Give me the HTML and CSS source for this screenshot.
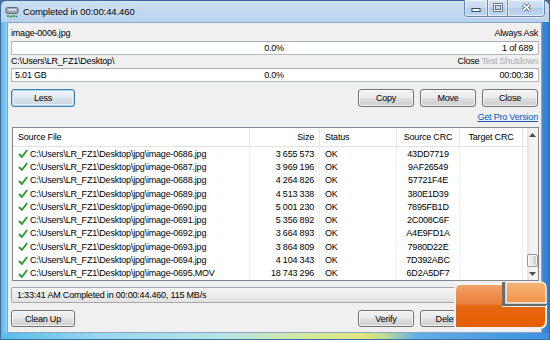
FILE: index.html
```html
<!DOCTYPE html>
<html>
<head>
<meta charset="utf-8">
<link rel="stylesheet" href="styles.css">
</head>
<body>
<div class="window">
  <div class="titlebar">
    <svg class="app-icon" width="14" height="13" viewBox="0 0 14 13">
      <rect x="1" y="1.5" width="12" height="6" rx="1.5" fill="#9aa6b0" stroke="#5d6a75" stroke-width="1"/>
      <rect x="2.5" y="3" width="9" height="1.5" fill="#dfe6ec"/>
      <circle cx="3" cy="10" r="1.2" fill="#3aa34a"/>
      <circle cx="6" cy="10.5" r="1.2" fill="#3aa34a"/>
      <circle cx="9" cy="10" r="1.2" fill="#3aa34a"/>
      <circle cx="11.5" cy="10.5" r="1" fill="#2d7fc1"/>
    </svg>
    <span class="title">Completed in 00:00:44.460</span>
    <div class="caption-btns">
      <div class="cb cb-min">
        <svg width="10" height="6" viewBox="0 0 10 6"><rect x="1" y="1.5" width="8" height="3" fill="#fff" stroke="#3a4b5e" stroke-width="1"/></svg>
      </div>
      <div class="cb cb-max">
        <svg width="10" height="9" viewBox="0 0 10 9"><rect x="1.5" y="1.5" width="7" height="6" fill="none" stroke="#3a4b5e" stroke-width="2.4"/><rect x="1.5" y="1.5" width="7" height="6" fill="none" stroke="#fff" stroke-width="1"/></svg>
      </div>
      <div class="cb cb-close">
        <svg width="11" height="9" viewBox="0 0 11 9"><path d="M2 1.5 L9 7.5 M9 1.5 L2 7.5" stroke="#3a4b5e" stroke-width="3.4"/><path d="M2 1.5 L9 7.5 M9 1.5 L2 7.5" stroke="#fff" stroke-width="1.8"/></svg>
      </div>
    </div>
  </div>
  <div class="frame-mid">
    <div class="client">
      <div class="label-row">
        <span>image-0006.jpg</span>
        <span>Always Ask</span>
      </div>
      <div class="progress first">
        <span class="p-left"></span>
        <span class="p-mid">0.0%</span>
        <span class="p-right">1 of 689</span>
      </div>
      <div class="label-row">
        <span>C:\Users\LR_FZ1\Desktop\</span>
        <span class="after-actions"><span>Close</span> <span class="dim">Test</span> <span class="dim">Shutdown</span></span>
      </div>
      <div class="progress">
        <span class="p-left">5.01 GB</span>
        <span class="p-mid">0.0%</span>
        <span class="p-right">00:00:38</span>
      </div>
      <div class="button-row">
        <button class="btn btn-default">Less</button>
        <div class="btn-group">
          <button class="btn">Copy</button>
          <button class="btn">Move</button>
          <button class="btn">Close</button>
        </div>
      </div>
      <div class="link-row"><a class="pro-link">Get Pro Version</a></div>
      <div class="list">
        <div class="list-main">
          <div class="list-head">
            <div class="hc">Source File</div>
            <div class="hc r">Size</div>
            <div class="hc">Status</div>
            <div class="hc c">Source CRC</div>
            <div class="hc c">Target CRC</div>
            <div class="hc last"></div>
          </div>
          <div class="rows">
            <div class="row"><div class="cell file"><svg class="tick" width="10" height="9" viewBox="0 0 10 9"><path d="M1 5 L3.8 8 L9.2 1" fill="none" stroke="#2e9b32" stroke-width="1.9"/></svg>C:\Users\LR_FZ1\Desktop\jpg\image-0686.jpg</div><div class="cell r">3 655 573</div><div class="cell">OK</div><div class="cell c">43DD7719</div><div class="cell"></div><div class="cell last"></div></div>
            <div class="row"><div class="cell file"><svg class="tick" width="10" height="9" viewBox="0 0 10 9"><path d="M1 5 L3.8 8 L9.2 1" fill="none" stroke="#2e9b32" stroke-width="1.9"/></svg>C:\Users\LR_FZ1\Desktop\jpg\image-0687.jpg</div><div class="cell r">3 969 196</div><div class="cell">OK</div><div class="cell c">9AF26549</div><div class="cell"></div><div class="cell last"></div></div>
            <div class="row"><div class="cell file"><svg class="tick" width="10" height="9" viewBox="0 0 10 9"><path d="M1 5 L3.8 8 L9.2 1" fill="none" stroke="#2e9b32" stroke-width="1.9"/></svg>C:\Users\LR_FZ1\Desktop\jpg\image-0688.jpg</div><div class="cell r">4 264 826</div><div class="cell">OK</div><div class="cell c">57721F4E</div><div class="cell"></div><div class="cell last"></div></div>
            <div class="row"><div class="cell file"><svg class="tick" width="10" height="9" viewBox="0 0 10 9"><path d="M1 5 L3.8 8 L9.2 1" fill="none" stroke="#2e9b32" stroke-width="1.9"/></svg>C:\Users\LR_FZ1\Desktop\jpg\image-0689.jpg</div><div class="cell r">4 513 338</div><div class="cell">OK</div><div class="cell c">380E1D39</div><div class="cell"></div><div class="cell last"></div></div>
            <div class="row"><div class="cell file"><svg class="tick" width="10" height="9" viewBox="0 0 10 9"><path d="M1 5 L3.8 8 L9.2 1" fill="none" stroke="#2e9b32" stroke-width="1.9"/></svg>C:\Users\LR_FZ1\Desktop\jpg\image-0690.jpg</div><div class="cell r">5 001 230</div><div class="cell">OK</div><div class="cell c">7895FB1D</div><div class="cell"></div><div class="cell last"></div></div>
            <div class="row"><div class="cell file"><svg class="tick" width="10" height="9" viewBox="0 0 10 9"><path d="M1 5 L3.8 8 L9.2 1" fill="none" stroke="#2e9b32" stroke-width="1.9"/></svg>C:\Users\LR_FZ1\Desktop\jpg\image-0691.jpg</div><div class="cell r">5 356 892</div><div class="cell">OK</div><div class="cell c">2C008C6F</div><div class="cell"></div><div class="cell last"></div></div>
            <div class="row"><div class="cell file"><svg class="tick" width="10" height="9" viewBox="0 0 10 9"><path d="M1 5 L3.8 8 L9.2 1" fill="none" stroke="#2e9b32" stroke-width="1.9"/></svg>C:\Users\LR_FZ1\Desktop\jpg\image-0692.jpg</div><div class="cell r">3 664 893</div><div class="cell">OK</div><div class="cell c">A4E9FD1A</div><div class="cell"></div><div class="cell last"></div></div>
            <div class="row"><div class="cell file"><svg class="tick" width="10" height="9" viewBox="0 0 10 9"><path d="M1 5 L3.8 8 L9.2 1" fill="none" stroke="#2e9b32" stroke-width="1.9"/></svg>C:\Users\LR_FZ1\Desktop\jpg\image-0693.jpg</div><div class="cell r">3 864 809</div><div class="cell">OK</div><div class="cell c">7980D22E</div><div class="cell"></div><div class="cell last"></div></div>
            <div class="row"><div class="cell file"><svg class="tick" width="10" height="9" viewBox="0 0 10 9"><path d="M1 5 L3.8 8 L9.2 1" fill="none" stroke="#2e9b32" stroke-width="1.9"/></svg>C:\Users\LR_FZ1\Desktop\jpg\image-0694.jpg</div><div class="cell r">4 104 343</div><div class="cell">OK</div><div class="cell c">7D392ABC</div><div class="cell"></div><div class="cell last"></div></div>
            <div class="row"><div class="cell file"><svg class="tick" width="10" height="9" viewBox="0 0 10 9"><path d="M1 5 L3.8 8 L9.2 1" fill="none" stroke="#2e9b32" stroke-width="1.9"/></svg>C:\Users\LR_FZ1\Desktop\jpg\image-0695.MOV</div><div class="cell r">18 743 296</div><div class="cell">OK</div><div class="cell c">6D2A5DF7</div><div class="cell"></div><div class="cell last"></div></div>
          </div>
        </div>
        <div class="scrollbar">
          <div class="sb-arrow"><svg width="7" height="4" viewBox="0 0 7 4"><path d="M0 4 L3.5 0 L7 4 Z" fill="#4d4d4d"/></svg></div>
          <div class="sb-track"><div class="sb-thumb"></div></div>
          <div class="sb-arrow"><svg width="7" height="4" viewBox="0 0 7 4"><path d="M0 0 L3.5 4 L7 0 Z" fill="#4d4d4d"/></svg></div>
        </div>
      </div>
      <div class="statusbar">1:33:41 AM Completed in 00:00:44.460, 115 MB/s</div>
      <div class="button-row bottom-row">
        <button class="btn">Clean Up</button>
        <div class="btn-group">
          <button class="btn">Verify</button>
          <button class="btn">Delete</button>
        </div>
      </div>
    </div>
  </div>
  <div class="frame-bottom"></div>
  <svg class="site-logo" width="96" height="48" viewBox="0 0 96 48">
    <defs>
      <linearGradient id="lgMain" x1="0" y1="0" x2="0" y2="1">
        <stop offset="0" stop-color="#f2a468"/>
        <stop offset="0.45" stop-color="#e9803a"/>
        <stop offset="0.5" stop-color="#e66812"/>
        <stop offset="1" stop-color="#e45c00"/>
      </linearGradient>
      <linearGradient id="lgLight" x1="0" y1="0" x2="0" y2="1">
        <stop offset="0" stop-color="#f8b67c"/>
        <stop offset="1" stop-color="#f2934a"/>
      </linearGradient>
    </defs>
    <path d="M8 3 H50 V25 H93 V40 Q93 47 86 47 H2 V9 Q2 3 8 3 Z" fill="url(#lgMain)" stroke="#f3f3f3" stroke-width="2"/>
    <rect x="49" y="1" width="44" height="24" fill="#6c6c6c"/>
    <path d="M53 1 H87 Q93 1 93 7 V22 H53 Z" fill="url(#lgLight)" stroke="#f3f3f3" stroke-width="1.5"/>
  </svg>
</div>
</body>
</html>
```
FILE: styles.css
```css
* { box-sizing: border-box; }

html, body {
  margin: 0;
  padding: 0;
}

body {
  width: 550px;
  height: 340px;
  overflow: hidden;
  font-family: "Liberation Sans", Arial, sans-serif;
  font-size: 9px;
  letter-spacing: -0.2px;
  color: #000;
  background: #fff;
}

.window {
  position: relative;
  width: 550px;
  height: 340px;
  display: flex;
  flex-direction: column;
  background: linear-gradient(90deg, #49b2e6 0%, #8fcdf0 1.2%, #a9d3f0 4%, #b6d2ee 50%, #8cbbe6 95%, #3f8edb 98.5%, #2b78d0 100%);
  box-shadow: inset 0 0 0 1px #3d6a98;
}

/* Title bar */
.titlebar {
  height: 22px;
  flex: none;
  display: flex;
  align-items: center;
  padding-left: 4px;
  background: linear-gradient(180deg, #cde0f3 0%, #c0d7ef 60%, #b9d2ed 100%);
  border-top: 1px solid #3d6a98;
  border-left: 1px solid #3d6a98;
  border-right: 1px solid #3d6a98;
  border-radius: 6px 6px 0 0;
}

.app-icon {
  flex: none;
  margin-right: 4px;
  margin-top: 1px;
}

.title {
  font-size: 9.5px;
  letter-spacing: -0.1px;
  color: #000;
  text-shadow: 0 0 6px rgba(255,255,255,0.9);
}

.caption-btns {
  margin-left: auto;
  margin-right: 4px;
  align-self: flex-start;
  margin-top: -1px;
  display: flex;
  height: 17px;
  border: 1px solid #6d86a5;
  border-top: none;
  border-radius: 0 0 4px 4px;
  overflow: hidden;
  box-shadow: 0 1px 0 rgba(255,255,255,0.6);
}

.cb {
  display: flex;
  align-items: center;
  justify-content: center;
  background: linear-gradient(180deg, #d3e3f3 0%, #c6daf0 50%, #b4cde9 50%, #bcd6f1 100%);
  box-shadow: inset 0 0 0 1px rgba(255,255,255,0.55);
}

.cb-min { width: 23px; border-right: 1px solid #6d86a5; padding-top: 4px; }
.cb-max { width: 20px; border-right: 1px solid #6d86a5; padding-bottom: 2px; }
.cb-close { width: 36px; padding-bottom: 2px; }

/* Frame */
.frame-mid {
  flex: 1;
  display: flex;
  padding: 0 8px 0 7px;
  min-height: 0;
  min-width: 0;
}

.client {
  flex: 1;
  display: flex;
  flex-direction: column;
  background: #f0f0f0;
  border: 1px solid #8da5c2;
  padding: 4px 2px 0 3px;
  min-height: 0;
  min-width: 0;
}

.frame-bottom {
  height: 7px;
  flex: none;
  background: linear-gradient(90deg, #58bde9 0%, #9ad6ef 18%, #b6e3e6 40%, #d2eaa2 55%, #e3e67c 66%, #bcdc98 70%, #5eb0e6 76%, #3d8fde 100%);
  border-bottom: 1px solid #3a6f9f;
  border-left: 1px solid #3d6a98;
  border-right: 1px solid #3d6a98;
}

/* Labels and progress */
.label-row {
  display: flex;
  justify-content: space-between;
  align-items: center;
  height: 13px;
  line-height: 13px;
  padding: 0 1px 0 0;
  flex: none;
}

.after-actions .dim { color: #ababab; }

.progress {
  height: 14px;
  flex: none;
  display: grid;
  grid-template-columns: 1fr auto 1fr;
  align-items: center;
  background: #fff;
  border: 1px solid #b5b9c0;
  border-top-color: #a9adb5;
  padding: 0 5px 0 3px;
}

.progress.first { margin-top: 1px; }

.p-left { text-align: left; }
.p-mid { text-align: center; }
.p-right { text-align: right; }

/* Buttons */
.button-row {
  display: flex;
  align-items: center;
  margin-top: 7px;
  flex: none;
}

.btn-group {
  margin-left: auto;
  display: flex;
  gap: 6px;
  margin-right: 1px;
}

.btn {
  width: 56px;
  height: 18px;
  padding: 0;
  font-family: inherit;
  font-size: 9px;
  letter-spacing: -0.2px;
  color: #000;
  border: 1px solid #707070;
  border-radius: 3px;
  background: linear-gradient(180deg, #f2f2f2 0%, #ebebeb 48%, #dddddd 52%, #cfcfcf 100%);
  box-shadow: inset 0 0 0 1px rgba(255,255,255,0.75);
}

.btn-default {
  width: 64px;
  border-color: #3c7fb1;
  background: linear-gradient(180deg, #eef3f7 0%, #e4ebf0 48%, #d6e0e8 52%, #c9d6e0 100%);
  box-shadow: inset 0 0 0 1px #a6d6f3, inset 0 0 0 2px rgba(255,255,255,0.5);
}

.link-row {
  display: flex;
  justify-content: flex-end;
  margin-top: 3px;
  height: 14px;
  line-height: 14px;
  padding-right: 1px;
  flex: none;
}

.pro-link {
  color: #0b55c4;
  text-decoration: underline;
}

/* List */
.list {
  margin-top: 3px;
  margin-left: 1px;
  height: 154px;
  flex: none;
  display: flex;
  background: #fff;
  border: 1px solid #828790;
  min-width: 0;
}

.list-main {
  flex: 1;
  min-width: 0;
  display: flex;
  flex-direction: column;
}

.list-head, .row {
  display: grid;
  grid-template-columns: 237px 70px 77px 63px 63px minmax(0, 1fr);
}

.list-head {
  height: 19px;
  border-bottom: 1px solid #e3e3e3;
}

.hc {
  display: flex;
  align-items: center;
  padding: 0 5px;
  border-right: 1px solid #e3e5e7;
  min-width: 0;
}

.hc.last, .cell.last { border-right: none; padding: 0; }

.r { justify-content: flex-end; }
.c { justify-content: center; }

.row {
  height: 13.3px;
}

.cell {
  display: flex;
  align-items: center;
  padding: 0 5px;
  white-space: nowrap;
  overflow: hidden;
  min-width: 0;
  border-right: 1px solid #f0f0f0;
}

.tick {
  flex: none;
  margin-right: 2px;
}

/* Scrollbar */
.scrollbar {
  width: 11px;
  flex: none;
  display: flex;
  flex-direction: column;
  background: linear-gradient(90deg, #e6e6e6 0%, #f3f3f3 40%, #f3f3f3 100%);
}

.sb-arrow {
  height: 13px;
  display: flex;
  align-items: center;
  justify-content: center;
}

.sb-track {
  flex: 1;
  display: flex;
  flex-direction: column;
  justify-content: flex-end;
}

.sb-thumb {
  height: 13px;
  border: 1px solid #979797;
  border-radius: 2px;
  background: linear-gradient(90deg, #f3f3f3 0%, #e8e8e8 50%, #d9d9d9 51%, #d0d0d0 100%);
  box-shadow: inset 0 0 0 1px rgba(255,255,255,0.7);
}

/* Status bar */
.statusbar {
  margin-top: 6px;
  height: 16px;
  flex: none;
  display: flex;
  align-items: center;
  padding-left: 5px;
  border: 1px solid #a7a7a7;
  border-radius: 2px;
  background: linear-gradient(180deg, #f7f7f7 0%, #ececec 50%, #e2e2e2 100%);
}

.bottom-row {
  margin-top: 7px;
}

.bottom-row .btn { height: 17px; }
.bottom-row > .btn { width: 64px; }
.bottom-row .btn-group { margin-right: 63px; }

/* Watermark logo overlay */
.site-logo {
  position: absolute;
  left: 453px;
  top: 281px;
}
```
